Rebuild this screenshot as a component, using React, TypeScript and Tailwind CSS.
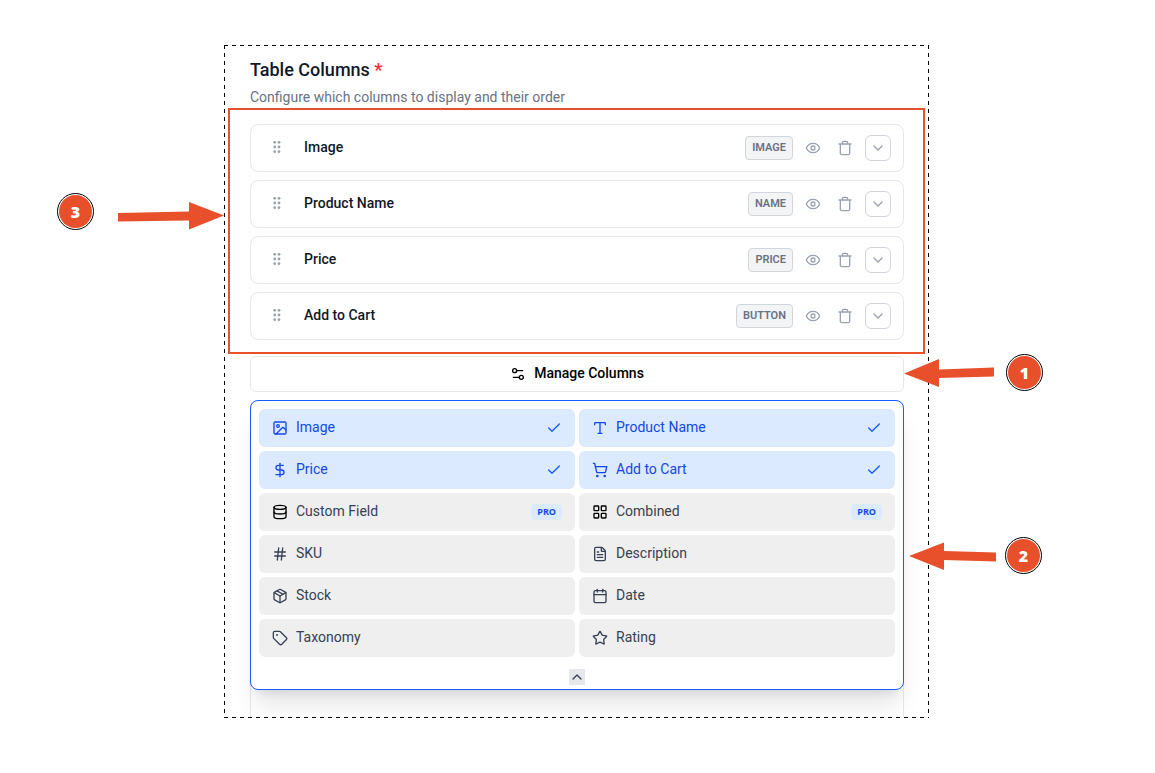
import { useState } from "react";
import type { ReactNode } from "react";
import {
  Calendar,
  Check,
  ChevronDown,
  ChevronUp,
  Database,
  DollarSign,
  FileText,
  Hash,
  Image,
  LayoutGrid,
  Package,
  Settings2,
  ShoppingCart,
  Star,
  Tag,
  Type,
} from "lucide-react";
import type { LucideIcon } from "lucide-react";

type Column = { name: string; type: string };

const columns: Column[] = [
  { name: "Image", type: "IMAGE" },
  { name: "Product Name", type: "NAME" },
  { name: "Price", type: "PRICE" },
  { name: "Add to Cart", type: "BUTTON" },
];

type Option = { name: string; icon: LucideIcon; pro?: boolean };

const options: Option[] = [
  { name: "Image", icon: Image },
  { name: "Product Name", icon: Type },
  { name: "Price", icon: DollarSign },
  { name: "Add to Cart", icon: ShoppingCart },
  { name: "Custom Field", icon: Database, pro: true },
  { name: "Combined", icon: LayoutGrid, pro: true },
  { name: "SKU", icon: Hash },
  { name: "Description", icon: FileText },
  { name: "Stock", icon: Package },
  { name: "Date", icon: Calendar },
  { name: "Taxonomy", icon: Tag },
  { name: "Rating", icon: Star },
];

function GripIcon() {
  return (
    <svg viewBox="0 0 8 14" className="h-[14px] w-2" fill="currentColor" aria-hidden="true">
      <circle cx="1.7" cy="2.3" r="1.4" />
      <circle cx="6" cy="2.3" r="1.4" />
      <circle cx="1.7" cy="7" r="1.4" />
      <circle cx="6" cy="7" r="1.4" />
      <circle cx="1.7" cy="11.7" r="1.4" />
      <circle cx="6" cy="11.7" r="1.4" />
    </svg>
  );
}

function EyeIcon() {
  return (
    <svg viewBox="0 0 16 16" className="size-4" fill="none" stroke="currentColor" strokeWidth="1.3" aria-hidden="true">
      <path d="M1.4 8C2.6 5 5.1 3.4 8 3.4S13.4 5 14.6 8C13.4 11 10.9 12.6 8 12.6S2.6 11 1.4 8Z" />
      <circle cx="8" cy="8" r="2" />
    </svg>
  );
}

function TrashIcon() {
  return (
    <svg viewBox="0 0 16 16" className="size-4" fill="none" stroke="currentColor" strokeWidth="1.33" strokeLinecap="round" strokeLinejoin="round" aria-hidden="true">
      <path d="M2 4H14M5.33 4V2.67Q5.33 1.33 6.67 1.33H9.33Q10.67 1.33 10.67 2.67V4M3.33 4V13.33Q3.33 14.67 4.67 14.67H11.33Q12.67 14.67 12.67 13.33V4" />
    </svg>
  );
}

function ColumnRow({ name, type }: Column) {
  return (
    <li className="flex h-12 items-center rounded-lg border border-gray-200 bg-white pr-3 pl-[22px]">
      <button type="button" aria-label={`Reorder ${name}`} className="-mt-[2px] text-gray-400">
        <GripIcon />
      </button>
      <span className="-mt-[2px] ml-[23px] flex-1 text-sm font-medium text-gray-900">{name}</span>
      <span className="flex h-6 items-center rounded border border-gray-300 bg-gray-100 px-[6px] text-[11px] font-semibold text-gray-500">
        {type}
      </span>
      <button type="button" aria-label={`Show or hide ${name}`} className="ml-3 text-gray-400">
        <EyeIcon />
      </button>
      <button type="button" aria-label={`Delete ${name}`} className="ml-4 text-gray-400">
        <TrashIcon />
      </button>
      <button
        type="button"
        aria-label={`Expand ${name}`}
        className="ml-3 flex size-[26px] items-center justify-center rounded-md border border-gray-300 text-gray-400"
      >
        <ChevronDown className="size-4" />
      </button>
    </li>
  );
}

function OptionButton({
  option,
  selected,
  onToggle,
}: {
  option: Option;
  selected: boolean;
  onToggle: () => void;
}) {
  const Icon = option.icon;
  const tone = selected ? "bg-blue-100 text-blue-700" : "bg-[#efefef] text-gray-700";
  return (
    <button
      type="button"
      aria-pressed={selected}
      onClick={onToggle}
      className={`flex h-[38px] items-center gap-2 rounded-md px-[13px] text-left text-sm ${tone}`}
    >
      <Icon className={option.pro ? "size-4 text-black" : "size-4"} />
      <span className="-mt-[2px] flex-1">{option.name}</span>
      {selected && <Check className="size-4 text-blue-600" />}
      {option.pro && (
        <span className="flex h-4 items-center rounded bg-blue-100 px-[6px] font-['Open_Sans',sans-serif] text-[9px] font-bold text-blue-700">
          PRO
        </span>
      )}
    </button>
  );
}

function Marker({ children }: { children: ReactNode }) {
  return (
    <span className="flex size-[37px] shrink-0 items-center justify-center rounded-full border border-black bg-white p-px">
      <span className="flex size-full items-center justify-center rounded-full bg-[#e8502b] font-['Noto_Sans',sans-serif] text-base font-black text-white">
        {children}
      </span>
    </span>
  );
}

function Arrow({ points }: { points: string }) {
  return (
    <svg viewBox="0 0 106 28" className="h-7 w-[106px] shrink-0" fill="#e8502b" aria-hidden="true">
      <polygon points={points} />
    </svg>
  );
}

export default function App() {
  const [selected, setSelected] = useState<string[]>(columns.map((c) => c.name));
  const [open, setOpen] = useState(true);

  const toggle = (name: string) =>
    setSelected((prev) => (prev.includes(name) ? prev.filter((n) => n !== name) : [...prev, name]));

  return (
    <main className="min-h-screen bg-white pt-[45px] pr-[226px] pb-[55px] pl-[224px] font-[Roboto,sans-serif] text-gray-900">
      <div className="relative">
        <div className="overflow-hidden bg-[repeating-linear-gradient(90deg,#000_0_4px,transparent_4px_8px),repeating-linear-gradient(90deg,#000_0_4px,transparent_4px_8px),repeating-linear-gradient(180deg,#000_0_4px,transparent_4px_8px),repeating-linear-gradient(180deg,#000_0_4px,transparent_4px_8px)] bg-[size:100%_1px,100%_1px,1px_100%,1px_100%] bg-[position:left_top,left_bottom,left_top,right_top] bg-no-repeat pb-px">
          <header className="px-[26px] pt-[11px]">
            <h1 className="text-lg leading-7 font-medium">
              Table Columns <span className="font-bold text-red-500">*</span>
            </h1>
            <p className="mt-[3px] text-sm leading-5 text-gray-500">
              Configure which columns to display and their order
            </p>
          </header>

          <section aria-label="Displayed columns" className="mx-1 mt-px border-2 border-[#e8502b] pt-[14px] pr-[19px] pb-3 pl-5">
            <ul className="flex flex-col gap-2">
              {columns.map((c) => (
                <ColumnRow key={c.name} {...c} />
              ))}
            </ul>
          </section>

          <div className="pr-[25px] pl-[26px]">
            <button
              type="button"
              aria-expanded={open}
              onClick={() => setOpen(!open)}
              className="mt-[2px] flex h-9 w-full items-center justify-center gap-2 rounded-md border border-gray-200 bg-white text-sm font-medium text-black"
            >
              <Settings2 className="size-4" />
              <span className="-mt-[2px]">Manage Columns</span>
            </button>

            <div className="mt-2 rounded-t-lg border-x border-gray-200 pb-[27px]">
              {open && (
                <section
                  aria-label="Available columns"
                  className="-mx-px rounded-lg border border-blue-600 bg-white px-2 pt-2 pb-1 shadow-xl"
                >
                  <div className="grid grid-cols-2 gap-1">
                    {options.map((o) => (
                      <OptionButton
                        key={o.name}
                        option={o}
                        selected={selected.includes(o.name)}
                        onToggle={() => toggle(o.name)}
                      />
                    ))}
                  </div>
                  <button
                    type="button"
                    aria-label="Collapse"
                    onClick={() => setOpen(false)}
                    className="mx-auto mt-3 flex size-4 items-center justify-center bg-gray-200 text-gray-700"
                  >
                    <ChevronUp className="size-4" />
                  </button>
                </section>
              )}
            </div>
          </div>
        </div>

        <div className="absolute top-[148px] right-full flex items-start gap-6">
          <Marker>3</Marker>
          <div className="mt-[9px]">
            <Arrow points="0,19.5 0,11 71,9.5 71,0 106,13.5 71,27.5 71,18.5" />
          </div>
        </div>
        <div className="absolute top-[309px] left-full -ml-[25px] flex items-center">
          <Arrow points="0,14.5 35,0 35,10.5 90,8.5 90,17.5 35,19 35,28" />
          <div className="-ml-1">
            <Marker>1</Marker>
          </div>
        </div>
        <div className="absolute top-[492px] left-full -ml-5 flex items-center">
          <Arrow points="0,14 35,0.5 35,9 87,10.5 87,19.5 35,18 35,28" />
          <div className="-ml-[10px]">
            <Marker>2</Marker>
          </div>
        </div>
      </div>
    </main>
  );
}
